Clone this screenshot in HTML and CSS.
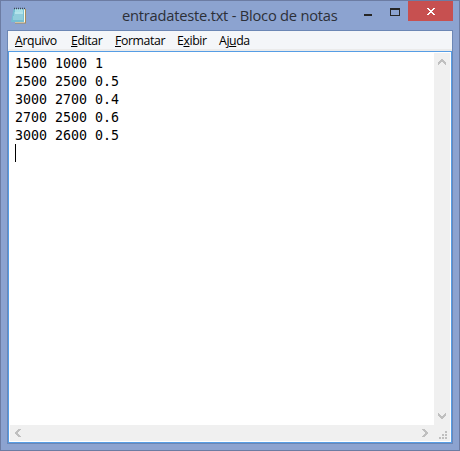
FILE: index.html
```html
<!DOCTYPE html>
<html lang="pt-BR">
<head>
<meta charset="utf-8">
<title>entradateste.txt - Bloco de notas</title>
<link rel="stylesheet" href="styles.css">
</head>
<body>
<div class="window">
  <header class="titlebar">
    <svg class="app-icon" width="16" height="18" viewBox="0 0 16 18">
      <path d="M4 2h11v14.5H4z" fill="#a58b5c"/>
      <path d="M4 2h10v13.5H4z" fill="#fffbe9"/>
      <path d="M2.5 2H13v13H0z" fill="#75bed2"/>
      <path d="M4 2h8v5H4z" fill="#a9e0e8"/>
      <path d="M3 6h9M3 8h9M2 10h10M2 12h10" stroke="#c5ebef" stroke-width=".7"/>
      <path d="M3 1.5h11" stroke="#3d4c55" stroke-width="1.6" stroke-dasharray="1 1"/>
    </svg>
    <h1 class="title">entradateste.txt - Bloco de notas</h1>
    <div class="controls">
      <svg class="minimize" width="8" height="2"><path d="M0 0h8v2H0z" fill="#262626"/></svg>
      <svg class="maximize" width="10" height="8" shape-rendering="crispEdges"><path d="M0 0h10v8H0zM1 2v5h8V2z" fill="#262626" fill-rule="evenodd"/></svg>
      <div class="close"><svg width="8" height="7" shape-rendering="crispEdges"><path d="M0 0h2v1h1v1h2V1h1V0h2v1H7v1H6v1H5v1h1v1h1v1h1v1H6V6H5V5H3v1H2v1H0V6h1V5h1V4h1V3H2V2H1V1H0z" fill="#fff"/></svg></div>
    </div>
  </header>
  <main class="client">
    <nav class="menu">
      <span class="arquivo"><u>A</u>rquivo</span>
      <span class="editar"><u>E</u>ditar</span>
      <span class="formatar"><u>F</u>ormatar</span>
      <span class="exibir">E<u>x</u>ibir</span>
      <span class="ajuda">Aj<u>u</u>da</span>
    </nav>
    <div class="editor">
      <div class="text"><pre>1500 1000 1
2500 2500 0.5
3000 2700 0.4
2700 2500 0.6
3000 2600 0.5</pre><div class="caret"></div></div>
      <div class="vscroll">
        <svg width="8" height="6" shape-rendering="crispEdges"><path d="M3 0h2v1h1v1h1v1h1v3H7V5H6V4H5V3H3v1H2v1H1v1H0V3h1V2h1V1h1z"/></svg>
        <svg width="8" height="6" shape-rendering="crispEdges"><path d="M3 6h2V5h1V4h1V3h1V0H7v1H6v1H5v1H3V2H2V1H1V0H0v3h1v1h1v1h1z"/></svg>
      </div>
      <div class="hscroll">
        <svg width="6" height="8" shape-rendering="crispEdges"><path d="M0 3v2h1v1h1v1h1v1h3V7H5V6H4V5H3V3h1V2h1V1h1V0H3v1H2v1H1v1z"/></svg>
        <svg width="6" height="8" shape-rendering="crispEdges"><path d="M6 3v2H5v1H4v1H3v1H0V7h1V6h1V5h1V3H2V2H1V1H0V0h3v1h1v1h1v1z"/></svg>
      </div>
      <div class="grip"><svg width="8" height="8" shape-rendering="crispEdges"><path d="M6 0h2v2H6zM3 3h2v2H3zM6 3h2v2H6zM0 6h2v2H0zM3 6h2v2H3zM6 6h2v2H6z"/></svg></div>
    </div>
  </main>
</div>
</body>
</html>
```
FILE: styles.css
```css
* { box-sizing: border-box; }
body { margin: 0; }
.window {
  width: 460px;
  height: 451px;
  padding: 0 6px 6px;
  border: 1px solid #6c7ca3;
  background: #8ca3d0;
}
.titlebar { display: flex; height: 29px; }
.app-icon { margin: 6px 0 0 4px; }
.title {
  width: 217px;
  margin: 4px 0 0 95px;
  font: 14.7px/21px "Open Sans", "Noto Sans", sans-serif;
  letter-spacing: -0.23px;
  color: #2c3038;
  white-space: nowrap;
}
.controls { display: flex; margin-left: auto; }
.minimize { margin-top: 13px; }
.maximize { margin: 7px 8px 0 18px; }
.close {
  display: flex;
  align-items: center;
  justify-content: center;
  width: 45px;
  height: 20px;
  padding-top: 1px;
  background: #c75050;
}
.client {
  display: flex;
  flex-direction: column;
  width: 446px;
  height: 414px;
  border: 1px solid #6c87b5;
}
.menu {
  display: flex;
  height: 20px;
  padding-left: 7px;
  border-bottom: 2px solid #ebebeb;
  background: #f4f6f9;
  font: 12.3px/19px "Open Sans", "Noto Sans", sans-serif;
  letter-spacing: -0.4px;
  color: #000;
}
.menu u { text-decoration-thickness: 1px; text-underline-offset: 1px; text-decoration-skip-ink: none; }
.arquivo { width: 56px; }
.editar { width: 44px; }
.formatar { width: 62px; }
.exibir { width: 42px; }
.editor {
  display: grid;
  flex: 1;
  grid-template: 1fr 16px / 1fr 16px;
  padding: 1px;
  border: 1px solid #569de5;
  background: #fff;
}
.text { padding: 2px 0 0 5px; }
.text pre {
  margin: 0;
  font: 13.3px/18px "DejaVu Sans Mono", monospace;
  color: #000;
}
.caret { width: 1px; height: 18px; margin-top: -1px; background: #000; }
.vscroll, .hscroll, .grip { background: #f0f0f0; fill: #bfbfbf; }
.vscroll {
  display: flex;
  flex-direction: column;
  align-items: center;
  justify-content: space-between;
  padding: 6px 1px 6px 0;
}
.hscroll {
  display: flex;
  align-items: center;
  justify-content: space-between;
  padding: 0 6px 1px 5px;
}
.grip { display: flex; align-items: flex-end; justify-content: flex-end; padding: 0 3px 2px 0; }
```
